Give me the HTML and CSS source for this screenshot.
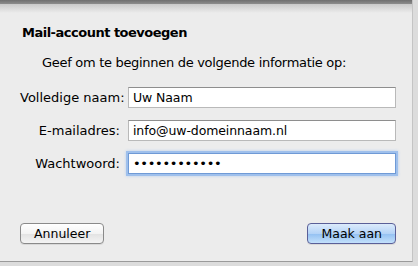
FILE: index.html
```html
<!DOCTYPE html>
<html lang="nl">
<head>
  <meta charset="UTF-8" />
  <title>Mail-account toevoegen</title>
  <link rel="stylesheet" href="styles.css">
</head>
<body>

  <div class="sheet">
    <div class="titelbalk"></div>
    <div class="inhoud">
      <h1>Mail-account toevoegen</h1>
      <p class="uitleg">Geef om te beginnen de volgende informatie op:</p>

      <div class="formulier">
        <label for="naam">Volledige naam:</label>
        <input id="naam" type="text" value="Uw Naam">

        <label for="email">E-mailadres:</label>
        <input id="email" type="text" value="info@uw-domeinnaam.nl">

        <label for="wachtwoord">Wachtwoord:</label>
        <input id="wachtwoord" class="actief" type="password" value="wachtwoord12">
      </div>

      <div class="knoppen">
        <button class="knop">Annuleer</button>
        <button class="knop standaard">Maak aan</button>
      </div>
    </div>
  </div>

</body>
</html>
```

FILE: styles.css
```css
  body {
    margin: 0;
    background-color: #dcdcdc;
    font-family: "DejaVu Sans", "Noto Sans", sans-serif;
    font-size: 13px;
    color: #000;
  }

  .sheet {
    width: 413px;
    height: 262px;
    background-color: #ececec;
    border-right: 1px solid #c4c4c4;
    border-bottom: 1px solid #9a9a9a;
    box-sizing: border-box;
    display: flex;
    flex-direction: column;
  }

  .titelbalk {
    height: 4px;
    background: linear-gradient(#6f6f6f, #8c8c8c);
    flex: none;
  }

  .inhoud {
    flex: 1;
    background: linear-gradient(#c9c9c9 0, #ececec 9px);
    padding: 0 16px 0 20px;
    display: flex;
    flex-direction: column;
  }

  h1 {
    font-size: 13px;
    font-weight: bold;
    letter-spacing: -0.5px;
    margin: 21px 0 0 2px;
    line-height: 16px;
  }

  .uitleg {
    letter-spacing: -0.3px;
    margin: 14px 0 0 22px;
    line-height: 16px;
  }

  .formulier {
    display: grid;
    grid-template-columns: 100px 268px;
    column-gap: 8px;
    row-gap: 12px;
    align-items: center;
    margin-top: 16px;
  }

  label {
    text-align: right;
    white-space: nowrap;
  }

  input {
    height: 21px;
    box-sizing: border-box;
    margin: 0;
    padding: 0 4px;
    border: 1px solid #b9b9b9;
    border-top-color: #8e8e8e;
    background: #fff;
    font-family: inherit;
    font-size: 12.5px;
    letter-spacing: -0.1px;
    color: #000;
    outline: none;
  }

  input.actief {
    border: 1px solid #6f9ad6;
    box-shadow: 0 0 0 2px #9fc0ec, 0 0 3px 2px #b8d0f0;
    font-size: 13px;
    letter-spacing: -0.3px;
  }

  .knoppen {
    margin-top: auto;
    margin-bottom: 17px;
    display: flex;
    justify-content: space-between;
  }

  .knop {
    height: 21px;
    padding: 0 13px;
    border: 1px solid #8a8a8a;
    border-radius: 4px;
    background: linear-gradient(#ffffff, #f3f3f3 50%, #e2e2e2 51%, #f4f4f4);
    font-family: inherit;
    font-size: 12.5px;
    color: #000;
    box-shadow: 0 1px 0 rgba(0,0,0,0.08);
  }

  .standaard {
    border-color: #5a5f98;
    background: linear-gradient(#dcebfb, #b4d3f7 50%, #92c0f2 51%, #c3e0fb);
  }
```
